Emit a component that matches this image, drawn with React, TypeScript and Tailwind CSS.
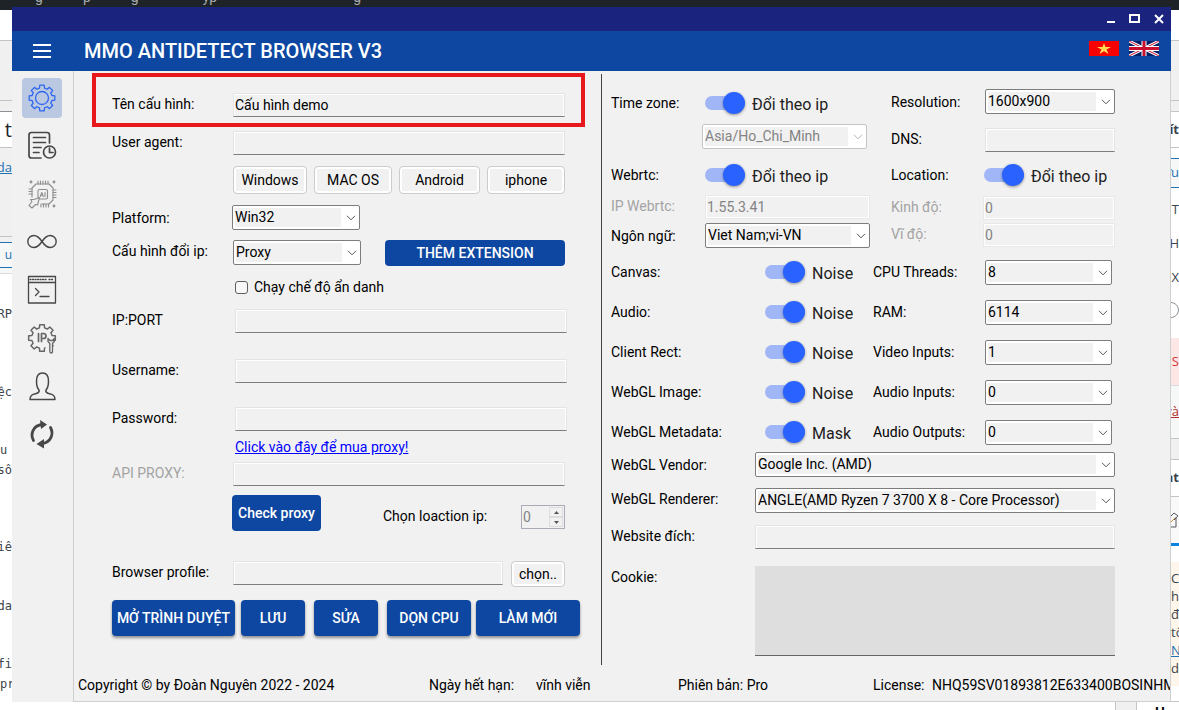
import { useId, useState } from "react";
import type { ReactNode } from "react";
import clsx from "clsx";

const fieldBox =
  "h-6 min-w-0 border border-[#e4e4e4] border-b-[#7d7d7d] bg-[#f1f1f1] px-px text-sm outline-none shadow-[inset_1px_1px_0_#fff,inset_-1px_0_0_#fff] disabled:border-[#e8e8e8] disabled:text-[#838383] disabled:shadow-[inset_0_0_0_1px_#fff]";

const blueButton = "rounded bg-[#0d47a1] text-sm font-medium text-white hover:bg-[#1256bd]";
const liftedButton = "h-9 shadow-[0_2px_3px_rgba(0,0,0,0.4)]";
const lightButton =
  "rounded border border-[#cccccc] bg-[#f1f1f1] text-sm shadow-[inset_0_0_0_2px_#fff] hover:bg-[#e8e8e8]";

function Label({ id, muted, className, children }: { id?: string; muted?: boolean; className?: string; children: ReactNode }) {
  return (
    <label htmlFor={id} className={clsx("shrink-0 text-sm leading-[22px] whitespace-nowrap", muted ? "text-[#a3a3a3]" : "text-black", className)}>
      {children}
    </label>
  );
}

function Field({ label, labelWidth, value = "", disabled, className }: { label: string; labelWidth: string; value?: string; disabled?: boolean; className?: string }) {
  const id = useId();
  return (
    <div className={clsx("flex items-start", className)}>
      <Label id={id} muted={disabled} className={labelWidth}>{label}</Label>
      <input id={id} className={clsx(fieldBox, "flex-1")} defaultValue={value} disabled={disabled} />
    </div>
  );
}

function Select({ id, value, disabled, className, title }: { id?: string; value: string; disabled?: boolean; className?: string; title?: string }) {
  return (
    <div className={clsx("relative h-[25px] min-w-0 rounded-xs bg-white", className)}>
      <select
        id={id}
        aria-label={title}
        disabled={disabled}
        defaultValue={value}
        className="block size-full appearance-none rounded-xs border border-[#7d7d7d] bg-[#f1f1f1] bg-clip-content p-0.5 pr-[18px] text-sm leading-[19px] text-black opacity-100 outline-none disabled:border-[#c4c4c4] disabled:text-[#838383]"
      >
        <option>{value}</option>
      </select>
      <svg className="pointer-events-none absolute top-[10px] right-1" width="10" height="6" viewBox="0 0 10 6" fill="none" stroke={disabled ? "#b5b5b5" : "#555555"}>
        <path d="M1 0.8 5 4.8 9 0.8" />
      </svg>
    </div>
  );
}

function Toggle({ text, name }: { text: string; name: string }) {
  const [on, setOn] = useState(true);
  return (
    <label className="flex h-6 items-center gap-[7px] text-base leading-6 whitespace-nowrap text-[#212121]">
      <input
        type="checkbox"
        role="switch"
        aria-label={`${name} ${text}`}
        checked={on}
        onChange={(e) => setOn(e.target.checked)}
        className="relative h-3.5 w-10 appearance-none rounded-full bg-[#bdbdbd] before:absolute before:-top-1 before:left-0 before:size-[22px] before:rounded-full before:bg-white before:shadow-[0_1px_3px_rgba(0,0,0,0.4)] checked:bg-[#a1b6f7] checked:before:left-[18px] checked:before:bg-[#2962ff]"
      />
      <span className="pt-[3px]">{text}</span>
    </label>
  );
}

// outline of a cog: eight rounded teeth around the centre
function cogPath(c: number, outer: number, inner: number) {
  const points: string[] = [];
  for (let i = 0; i < 8; i++) {
    const a = (i * Math.PI) / 4 - Math.PI / 2;
    [[-0.25, inner], [-0.17, outer], [0.17, outer], [0.25, inner]].forEach(([d, r]) => {
      points.push(`${(c + r * Math.cos(a + d)).toFixed(2)} ${(c + r * Math.sin(a + d)).toFixed(2)}`);
    });
  }
  return `M${points.join("L")}Z`;
}

const menu: { name: string; icon: ReactNode }[] = [
  {
    name: "Settings",
    icon: (
      <g stroke="#2f67f0" strokeWidth="1.3">
        <path d={cogPath(15, 13, 10.2)} />
        <circle cx="15" cy="15" r="6.5" />
      </g>
    ),
  },
  {
    name: "Logs",
    icon: (
      <g strokeWidth="1.7">
        <path d="M14 27H4.5Q2 27 2 24.500V4Q2 1.500 4.500 1.500H20Q22.500 1.500 22.500 4V12" />
        <path d="M6.500 6.500H18.500M6.500 11.500H18.500M6.500 16.500H14M6.500 21.500H12" />
        <circle cx="22.500" cy="21" r="6" />
        <path d="M22.500 17V21.500H26" />
      </g>
    ),
  },
  {
    name: "Automation",
    icon: (
      <g stroke="#8d8d8d" strokeWidth="1.1">
        <path d="M9 5H22L26 9V21L22 25H15M5 18V9L9 5" />
        <path d="M11 2V5M13.500 2V5M16 2V5M18.500 2V5M21 2V5M14 25V28M16.500 25V28M19 25V28M21.500 25V28M2 10H5M2 12.500H5M2 15H5M26 11H29M26 13.500H29M26 16H29M26 18.500H29" />
        <rect x="11" y="10.500" width="9.500" height="9.500" rx="1.500" />
        <path d="M13.300 17.500 14.800 13.500 16.300 17.500M13.800 16.300H15.800M18 13.500V17.500" />
        <path d="M12.500 18.500 7 20.500H3.500L5 22.500 2 26.500 5 29 8.500 25.500 10.500 26 12.500 18.500Z" fill="#f1f1f1" />
        <circle cx="4" cy="3" r="0.900" />
        <circle cx="27" cy="3" r="0.900" />
        <circle cx="27" cy="27" r="0.900" />
      </g>
    ),
  },
  {
    name: "Loop",
    icon: <path strokeWidth="1.4" d="M15 14.500C12 10 10 8.500 6.800 8.500A6 6 0 0 0 6.800 20.500C10 20.500 12 19 15 14.500S20 8.500 23.200 8.500A6 6 0 0 1 23.200 20.500C20 20.500 18 19 15 14.500Z" />,
  },
  {
    name: "Console",
    icon: (
      <g strokeWidth="1.3">
        <rect x="1.500" y="1.500" width="27" height="26.500" />
        <path d="M2 7.500H28M8.500 13.500 12 17 8.500 20.500M13 21.500H22" />
        <path strokeDasharray="1 1.500" d="M3 4.500H19M22 4.500H27" />
      </g>
    ),
  },
  {
    name: "IP settings",
    icon: (
      <g stroke="#666666" strokeWidth="1.5">
        <path d={cogPath(15, 13.5, 10.4)} />
        <path stroke="none" fill="#f1f1f1" d="M18.500 14.500H26V30H18.500Z" />
        <path strokeWidth="1.700" d="M11.500 10.500V18.500M14.500 18.500V10.500H16.500Q19 10.500 19 13T16.500 15.500H14.500" />
        <path strokeWidth="1.300" d="M21 15.500V18.500L22.800 20.500V29Q24 31 25.500 29V20.500L27.300 18.500V15.500L25.500 17.500H23Z" />
      </g>
    ),
  },
  {
    name: "Account",
    icon: (
      <path
        strokeWidth="1.500"
        d="M3 28.500C3 24 5.500 23.500 9.500 22.500 12 21.800 12.500 20.800 12 19 9.500 16.500 9.500 14 9.500 10 9.500 4.500 11.500 2 15.500 2S21.500 4.500 21.500 10C21.500 14 21.500 16.500 19 19 18.500 20.800 19 21.800 21.500 22.500 25.500 23.500 28 24 28 28.500Z"
      />
    ),
  },
  {
    name: "Refresh",
    icon: (
      <g>
        <path strokeWidth="2.800" d="M6.500 21.500C3 15 6 7 14.500 5.500M23.500 8.500C27 15 24 23 15.500 24.500" />
        <path fill="#474747" stroke="none" d="M13 1 20 5.500 14 10ZM17 20V29.500L9.500 25Z" />
      </g>
    ),
  },
];

function FlagVN() {
  return (
    <svg width="30" height="15" viewBox="0 0 30 15">
      <rect width="30" height="15" fill="#f90000" />
      <path fill="#ffdb4d" d="M15 2 16.500 6H22L17.500 8.500 19.500 13 15 10.300 10.500 13 12.500 8.500 8 6H13.500Z" />
    </svg>
  );
}

function FlagUK() {
  return (
    <svg width="30" height="15" viewBox="0 0 30 15">
      <rect width="30" height="15" fill="#012169" />
      <path d="M0 0 30 15M30 0 0 15" stroke="#fff" strokeWidth="3" />
      <path d="M0 0 30 15M30 0 0 15" stroke="#c8102e" strokeWidth="1" />
      <path d="M15 0V15M0 7.500H30" stroke="#fff" strokeWidth="5" />
      <path d="M15 0V15M0 7.500H30" stroke="#c8102e" strokeWidth="3" />
    </svg>
  );
}

const band = "flex shrink-0 items-center justify-end overflow-hidden whitespace-nowrap";

// slices of the page that lies behind the window
const leftBands: [string, ReactNode?][] = [
  ["h-[3px] bg-[#1d2327]"],
  ["h-[31px] bg-white border-b border-[#c3c4c7]"],
  ["h-[60px] bg-[#f0f0f1] border-b border-[#c3c4c7]"],
  ["h-[11px] bg-[#f0f0f1] border-b border-[#8c8f94]"],
  ["h-9 bg-white border-b border-[#c3c4c7] text-xl text-[#1d2327]", "t"],
  ["h-10 bg-[#f0f0f1] text-[13px] text-[#2271b1] underline", "da"],
  ["h-[49px] bg-[#f0f0f1] border-b border-[#c3c4c7]"],
  ["h-1.5 bg-[#f0f0f1] border-b border-[#2271b1]"],
  ["h-[25px] bg-[#f6f7f7] border-b border-[#2271b1] text-xs text-[#2271b1]", "u"],
  ["h-1.5 bg-[#f6f7f7] border-b border-[#dcdcde]"],
  ["h-[30px]"],
  ["h-5 font-['DejaVu_Sans_Mono',monospace] text-xs", "RP"],
  ["h-[58px]"],
  ["h-5 font-['DejaVu_Sans_Mono',monospace] text-xs", "ệc"],
  ["h-[38px]"],
  ["h-5 justify-start! font-['DejaVu_Sans_Mono',monospace] text-xs", "u"],
  ["h-5 font-['DejaVu_Sans_Mono',monospace] text-xs", "số"],
  ["h-[57px]"],
  ["h-5 font-['DejaVu_Sans_Mono',monospace] text-xs", "iê"],
  ["h-[39px]"],
  ["h-5 font-['DejaVu_Sans_Mono',monospace] text-xs", "da"],
  ["h-[38px]"],
  ["h-5 font-['DejaVu_Sans_Mono',monospace] text-xs", "fi"],
  ["h-5 justify-start! font-['DejaVu_Sans_Mono',monospace] text-xs", "pre"],
];

const rightBands: [string, ReactNode?][] = [
  ["h-[3px] bg-[#1d2327]"],
  ["h-[31px] bg-white border-b border-[#c3c4c7]"],
  ["h-[60px] bg-[#f0f0f1] border-b border-[#c3c4c7]"],
  ["h-[11px] bg-[#f0f0f1] border-b border-[#c3c4c7]"],
  ["h-9 border-b border-[#c3c4c7] font-bold", "ít"],
  ["h-[11px] border-b border-[#2271b1]"],
  ["h-[29px] bg-[#f6f7f7] border-b border-[#2271b1] text-[#2271b1]", "ưu"],
  ["h-11", "T"],
  ["h-6", "H"],
  ["h-11", "X"],
  ["h-5", <div key="radio" className="size-4 shrink-0 rounded-full border border-[#8c8f94]" />],
  ["h-[18px]"],
  ["h-12 bg-[#fde6e6] border-b border-[#dcdcde] text-[#d63638]", "S"],
  ["h-[53px] bg-[#f6f7f7] border-b border-[#c3c4c7] text-[#b32d2e] underline", "và"],
  ["h-[21px] bg-[#f0f0f1] border-b border-[#c3c4c7]"],
  ["h-[37px] border-b border-[#c3c4c7] font-bold", "nt"],
  [
    "h-[46px] bg-[#f9f9f9]",
    <svg key="pencil" width="8" height="18" viewBox="0 0 8 18" fill="none" stroke="#50575e">
      <path d="M0 5 3 2 7 5 3 9M5 6V16H0" />
      <path stroke="#d98a3d" d="M0 11 4 7" />
    </svg>,
  ],
  ["h-[3px] bg-[#0a84e0]"],
  ["h-6 bg-[linear-gradient(#fff_16px,#fef6ea_16px)]"],
  ["h-[18px] bg-[#fef6ea] justify-start!", "Cá"],
  ["h-[18px] bg-[#fef6ea] justify-start!", "hư"],
  ["h-[18px] bg-[#fef6ea] justify-start!", "để"],
  ["h-[18px] bg-[#fef6ea] justify-start!", "tố"],
  ["h-[18px] bg-[#fef6ea] justify-start! text-[#2271b1] underline", "N"],
  ["h-[18px] bg-[#fef6ea] justify-start!", "dụ"],
  ["h-2 bg-[#fef6ea]"],
  ["h-4 border-b border-[#c3c4c7]"],
];

function Strip({ bands, className }: { bands: [string, ReactNode?][]; className: string }) {
  return (
    <div aria-hidden="true" className={clsx("flex shrink-0 flex-col overflow-hidden bg-white font-['Open_Sans',sans-serif] text-[13px] text-[#3c434a]", className)}>
      {bands.map(([style, content], i) => (
        <div key={i} className={clsx(band, style)}>{content}</div>
      ))}
    </div>
  );
}

const noises = [
  { name: "Canvas:", mode: "Noise", device: "CPU Threads:", value: "8" },
  { name: "Audio:", mode: "Noise", device: "RAM:", value: "6114" },
  { name: "Client Rect:", mode: "Noise", device: "Video Inputs:", value: "1" },
  { name: "WebGL Image:", mode: "Noise", device: "Audio Inputs:", value: "0" },
  { name: "WebGL Metadata:", mode: "Mask", device: "Audio Outputs:", value: "0" },
];

function ProfileForm() {
  const [location, setLocation] = useState(0);
  const [incognito, setIncognito] = useState(false);
  return (
    <section className="pr-4 pl-[18px] text-sm">
      <div className="border-4 border-[#e8191c] px-4 pt-4 pb-1.5">
        <Field label="Tên cấu hình:" labelWidth="w-[121px]" value="Cấu hình demo" />
      </div>

      <div className="px-5">
        <Field className="mt-1" label="User agent:" labelWidth="w-[121px]" />
        <div className="mt-[11px] ml-[121px] grid h-7 grid-cols-[74fr_78fr_81fr_78fr] gap-[7px]">
          {["Windows", "MAC OS", "Android", "iphone"].map((os) => (
            <button key={os} type="button" className={lightButton}>{os}</button>
          ))}
        </div>

        <div className="mt-[11px] flex h-[25px] items-center">
          <Label id="platform" className="w-[120px]">Platform:</Label>
          <Select id="platform" value="Win32" className="w-32" />
        </div>
        <div className="mt-2.5 flex h-[26px]">
          <Label id="ipmode" className="w-[121px]">Cấu hình đổi ip:</Label>
          <Select id="ipmode" value="Proxy" className="w-32" />
          <button type="button" className={clsx(blueButton, "ml-6 flex-1")}>THÊM EXTENSION</button>
        </div>
        <label className="mt-[9px] ml-[123px] flex h-6 w-fit items-center gap-1.5 whitespace-nowrap">
          <input type="checkbox" checked={incognito} onChange={(e) => setIncognito(e.target.checked)} className="size-[13px] appearance-none rounded-[3px] border border-[#5f5f5f] bg-[#f8f8f8] checked:bg-[#2962ff]" />
          Chạy chế độ ẩn danh
        </label>
      </div>

      <div className="pr-[18px] pl-5">
        <Field className="mt-2.5" label="IP:PORT" labelWidth="w-[123px]" />
        <Field className="mt-[26px]" label="Username:" labelWidth="w-[123px]" />
        <Field className="mt-6" label="Password:" labelWidth="w-[123px]" />
        <a href="#proxy" className="mt-1.5 ml-[123px] block h-5 w-fit whitespace-nowrap text-[#0000ff] underline">Click vào đây để mua proxy!</a>
      </div>

      <div className="px-5">
        <div className="mt-[5px] flex items-start">
          <Label id="api" muted className="w-[121px]">API PROXY:</Label>
          <input id="api" className={clsx(fieldBox, "flex-1")} />
        </div>
        <div className="mt-[9px] flex">
          <button type="button" className={clsx(blueButton, "ml-[120px] h-9 w-[89px] whitespace-nowrap")}>Check proxy</button>
          <div className="ml-auto flex items-start pt-2.5">
            <Label id="location" className="w-[138px]">Chọn loaction ip:</Label>
            <div className="flex h-6 w-11 border border-[#ababb5] bg-[#f1f1f1] p-px">
              <input id="location" value={location} onChange={(e) => setLocation(Number(e.target.value) || 0)} className="w-6 min-w-0 flex-1 text-[#838383] outline-none" />
              <div className="flex w-3.5 flex-col">
                <button type="button" aria-label="Up" onClick={() => setLocation(location + 1)} className="flex flex-1 items-center justify-center border border-[#dddddd]">
                  <svg width="5" height="3" viewBox="0 0 5 3"><path d="M0 3 2.500 0 5 3Z" fill="#555555" /></svg>
                </button>
                <button type="button" aria-label="Down" onClick={() => setLocation(Math.max(0, location - 1))} className="flex flex-1 items-center justify-center border border-[#dddddd]">
                  <svg width="5" height="3" viewBox="0 0 5 3"><path d="M0 0 2.500 3 5 0Z" fill="#555555" /></svg>
                </button>
              </div>
            </div>
          </div>
        </div>
        <div className="mt-[30px] flex items-start gap-2">
          <Field className="min-w-0 flex-1" label="Browser profile:" labelWidth="w-[121px]" />
          <button type="button" className={clsx(lightButton, "h-[26px] w-[54px]")}>chọn..</button>
        </div>
      </div>

      <div className="mt-[13px] flex pr-[5px] pl-5">
        <button type="button" className={clsx(blueButton, liftedButton, "w-[123px] whitespace-nowrap")}>MỞ TRÌNH DUYỆT</button>
        <button type="button" className={clsx(blueButton, liftedButton, "ml-1.5 w-16")}>LƯU</button>
        <button type="button" className={clsx(blueButton, liftedButton, "ml-[9px] w-16")}>SỬA</button>
        <button type="button" className={clsx(blueButton, liftedButton, "ml-[9px] w-[84px]")}>DỌN CPU</button>
        <button type="button" className={clsx(blueButton, liftedButton, "ml-[5px] min-w-0 flex-1")}>LÀM MỚI</button>
      </div>
    </section>
  );
}

function FingerprintForm() {
  return (
    <section className="mt-px border-l border-[#444444] pt-[15px] pr-[55px] pl-[9px] text-sm">
      <div className="grid grid-cols-[minmax(0,259fr)_minmax(0,224fr)] gap-[21px]">
        <div>
          <div className="flex h-7 items-center">
            <Label className="w-[94px]">Time zone:</Label>
            <Toggle name="Time zone" text="Đổi theo ip" />
          </div>
          <Select title="Time zone" value="Asia/Ho_Chi_Minh" disabled className="mt-[7px] mr-[3px] ml-[91px]" />
          <div className="mt-3 flex h-7 items-center">
            <Label className="w-[94px]">Webrtc:</Label>
            <Toggle name="Webrtc" text="Đổi theo ip" />
          </div>
          <Field className="mt-1.5" label="IP Webrtc:" labelWidth="w-[94px]" value="1.55.3.41" disabled />
          <div className="mt-1 flex items-center">
            <Label id="lang" className="w-[94px]">Ngôn ngữ:</Label>
            <Select id="lang" value="Viet Nam;vi-VN" className="flex-1" />
          </div>
        </div>
        <div>
          <div className="flex items-center">
            <Label id="res" className="w-[94px]">Resolution:</Label>
            <Select id="res" value="1600x900" className="flex-1" />
          </div>
          <Field className="mt-3.5" label="DNS:" labelWidth="w-[94px]" />
          <div className="mt-[9px] flex h-7 items-center">
            <Label className="w-[93px]">Location:</Label>
            <Toggle name="Location" text="Đổi theo ip" />
          </div>
          <Field className="mt-[7px]" label="Kinh độ:" labelWidth="w-[92px]" value="0" disabled />
          <Field className="mt-[3px]" label="Vĩ độ:" labelWidth="w-[92px]" value="0" disabled />
        </div>
      </div>

      <div className="mt-1">
        {noises.map((row) => (
          <div key={row.name} className="grid h-10 grid-cols-[minmax(0,262fr)_minmax(0,239fr)] pr-[3px]">
            <div className="flex items-center">
              <Label className="w-[154px]">{row.name}</Label>
              <Toggle name={row.name} text={row.mode} />
            </div>
            <div className="flex items-center">
              <Label id={row.device} className="w-28">{row.device}</Label>
              <Select id={row.device} value={row.value} className="flex-1" />
            </div>
          </div>
        ))}
      </div>

      <div className="flex items-center">
        <Label id="vendor" className="w-36">WebGL Vendor:</Label>
        <Select id="vendor" value="Google Inc. (AMD)" className="flex-1" />
      </div>
      <div className="mt-[11px] flex">
        <Label id="renderer" className="w-36">WebGL Renderer:</Label>
        <Select id="renderer" value="ANGLE(AMD Ryzen 7 3700 X 8 - Core Processor)" className="flex-1" />
      </div>
      <Field className="mt-3" label="Website đích:" labelWidth="w-36" />
      <div className="mt-[17px] flex items-start">
        <Label id="cookie" className="w-36">Cookie:</Label>
        <textarea id="cookie" className="h-[90px] min-w-0 flex-1 resize-none border-b border-[#666666] bg-[#dedede] p-1 outline-none" />
      </div>
    </section>
  );
}

export default function App() {
  return (
    <div className="flex h-screen min-h-[710px] flex-col overflow-hidden bg-white font-[Roboto,sans-serif] text-black">
      <div aria-hidden="true" className="flex h-[7px] shrink-0 items-end gap-10 overflow-hidden bg-[#1d2327] pb-[3px] pl-[35px] text-sm leading-none text-[#a7aaad]">
        <span>g</span>
        <span>p</span>
        <span>g</span>
        <span className="ml-6">yp</span>
        <span className="ml-24">g</span>
      </div>
      <div className="flex min-h-0 flex-1">
        <Strip bands={leftBands} className="w-3" />

        <div className="flex min-w-0 flex-1 flex-col">
          <main className="flex min-h-0 flex-1 flex-col bg-[#f1f1f1]">
            <div className="flex h-6 shrink-0 items-center justify-end gap-1 bg-[#1a237e] pr-0.5">
              <button type="button" aria-label="Minimize" className="flex size-5 items-center justify-center">
                <svg width="12" height="12" viewBox="0 0 12 12" stroke="#fff" strokeWidth="2"><path d="M2 9H10" /></svg>
              </button>
              <button type="button" aria-label="Maximize" className="flex size-5 items-center justify-center">
                <svg width="12" height="12" viewBox="0 0 12 12" fill="none" stroke="#fff" strokeWidth="2"><rect x="1" y="2" width="9" height="7" /></svg>
              </button>
              <button type="button" aria-label="Close" className="flex size-5 items-center justify-center">
                <svg width="12" height="12" viewBox="0 0 12 12" stroke="#fff" strokeWidth="2"><path d="M2 2 10 10M10 2 2 10" /></svg>
              </button>
            </div>

            <header className="flex h-10 shrink-0 items-center bg-[#0d47a1] pr-3 pl-[21px] text-white">
              <button type="button" aria-label="Menu" className="mr-[33px]">
                <svg width="18" height="14" viewBox="0 0 18 14" stroke="#fff" strokeWidth="2"><path d="M0 1H18M0 7H18M0 13H18" /></svg>
              </button>
              <h1 className="flex-1 text-xl font-medium whitespace-nowrap">MMO ANTIDETECT BROWSER V3</h1>
              <div className="flex gap-2.5 pb-1.5">
                <button type="button" aria-label="Tiếng Việt"><FlagVN /></button>
                <button type="button" aria-label="English"><FlagUK /></button>
              </div>
            </header>

            <div className="flex min-h-0 flex-1">
              <nav className="flex w-[62px] shrink-0 flex-col items-center gap-2 border-r border-[#cfcfcf] pt-[7px] pr-px">
                {menu.map((item, i) => (
                  <button key={item.name} type="button" aria-label={item.name} className={clsx("flex size-10 items-center justify-center rounded", i === 0 && "bg-[#bac9e1]")}>
                    <svg width="30" height="30" viewBox="0 0 30 30" fill="none" stroke="#474747" strokeLinejoin="round" strokeLinecap="round" overflow="visible">{item.icon}</svg>
                  </button>
                ))}
              </nav>

              <div className="flex min-w-0 flex-1 flex-col border-r border-b border-[#cfcfcf]">
                <div className="grid flex-1 grid-cols-[minmax(0,527fr)_minmax(0,569fr)] pt-0.5">
                  <ProfileForm />
                  <FingerprintForm />
                </div>
                <footer className="flex h-9 shrink-0 items-center overflow-hidden pt-1 pl-1 text-sm whitespace-nowrap">
                  <span className="w-[351px] shrink-0">Copyright © by Đoàn Nguyên 2022 - 2024</span>
                  <span className="w-[107px] shrink-0">Ngày hết hạn:</span>
                  <span className="w-[142px] shrink-0">vĩnh viễn</span>
                  <span className="w-[195px] shrink-0">Phiên bản: Pro</span>
                  <span className="w-[59px] shrink-0">License:</span>
                  <span>NHQ59SV01893812E633400BOSINHM</span>
                </footer>
              </div>
            </div>
          </main>

          <div aria-hidden="true" className="flex h-2 shrink-0 justify-end overflow-hidden bg-white">
            <div className="w-[22px] border-x border-[#c3c4c7] bg-[#f0f0f1]" />
            <div className="w-[34px] pt-1 pl-[18px] text-sm leading-none font-bold">Hướ</div>
          </div>
        </div>

        <Strip bands={rightBands} className="w-2" />
      </div>
    </div>
  );
}
